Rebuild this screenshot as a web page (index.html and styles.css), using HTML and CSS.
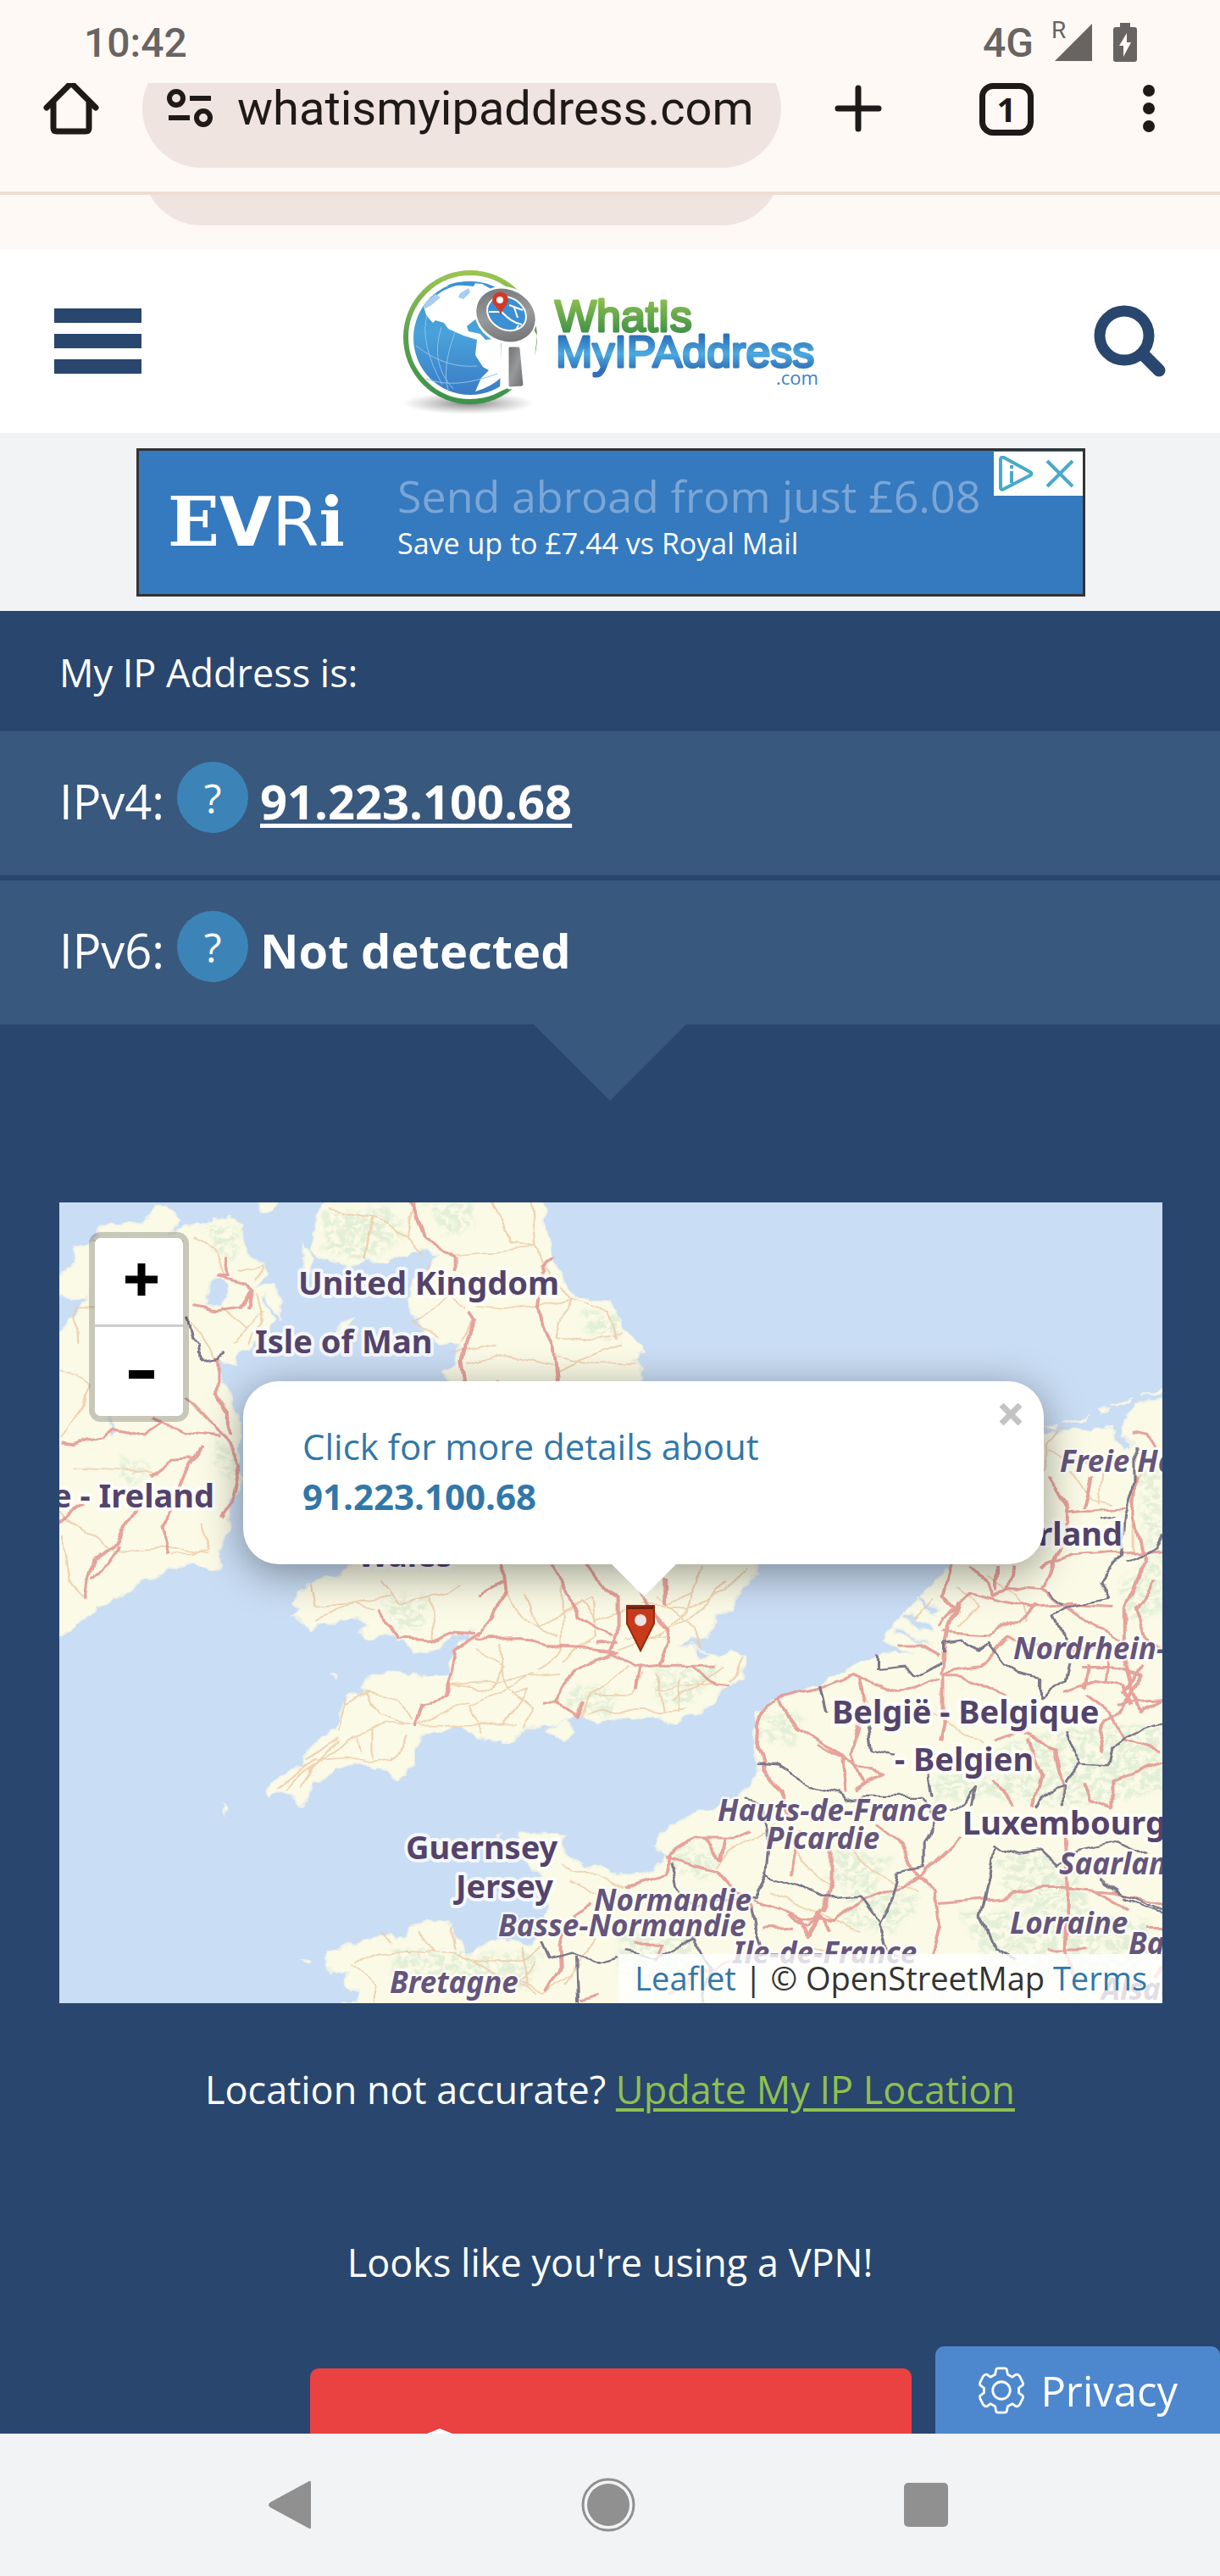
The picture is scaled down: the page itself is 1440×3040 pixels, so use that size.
FILE: index.html
```html
<!DOCTYPE html>
<html lang="en">
<head>
<meta charset="utf-8">
<meta name="viewport" content="width=device-width, initial-scale=1">
<title>What Is My IP Address</title>
<link rel="stylesheet" href="styles.css">
</head>
<body>
<div class="status-bar">
  <span class="clock">10:42</span>
  <div class="status-icons">
    <span class="network">4G</span>
    <span class="signal">
      <span class="roaming">R</span>
      <svg width="44" height="44" viewBox="0 0 44 44" aria-hidden="true"><path d="M44 0V44H0Z" fill="currentColor"/></svg>
    </span>
    <svg width="28" height="46" viewBox="0 0 28 46" aria-hidden="true"><path d="M8 0h12v5h5a3 3 0 0 1 3 3v35a3 3 0 0 1-3 3H3a3 3 0 0 1-3-3V8a3 3 0 0 1 3-3h5Z" fill="currentColor"/><path d="M16 12 7 27h5v13l9-17h-5Z" fill="#fff9f6"/></svg>
  </div>
</div>

<div class="toolbar">
  <button class="tool-btn" aria-label="Home">
    <svg width="66" height="64" viewBox="0 0 66 64" fill="none" stroke="currentColor" stroke-width="7" stroke-linecap="round" stroke-linejoin="round"><path d="M4 31 33 2 62 31M12 25V55q0 4 4 4H50q4 0 4-4V25"/></svg>
  </button>
  <div class="omnibox">
    <svg width="56" height="46" viewBox="0 0 56 46" fill="none" stroke="currentColor" stroke-width="6" aria-hidden="true"><circle cx="12" cy="11" r="8"/><path d="M28 11H53M3 34H28"/><circle cx="44" cy="34" r="8"/></svg>
    <input class="url" type="text" aria-label="Address" value="whatismyipaddress.com">
  </div>
  <button class="tool-btn" aria-label="New tab">
    <svg width="56" height="56" viewBox="0 0 56 56" stroke="currentColor" stroke-width="7" stroke-linecap="round"><path d="M28 4V52M4 28H52"/></svg>
  </button>
  <button class="tabs" aria-label="Open tabs">1</button>
  <button class="tool-btn" aria-label="More">
    <svg width="14" height="56" viewBox="0 0 14 56" fill="currentColor"><circle cx="7" cy="7" r="7"/><circle cx="7" cy="28" r="7"/><circle cx="7" cy="49" r="7"/></svg>
  </button>
</div>
<div class="toolbar-tail"><div class="tail-pill"></div></div>

<header class="site-header">
  <button class="menu-btn" aria-label="Menu"><span></span><span></span><span></span></button>
  <a class="logo" href="#" aria-label="WhatIsMyIPAddress.com">
    <svg width="500" height="180" viewBox="0 0 500 180">
      <defs>
        <linearGradient id="ring" x1="0" y1="0" x2="0" y2="1"><stop offset="0" stop-color="#9ac552"/><stop offset=".5" stop-color="#5aa050"/><stop offset="1" stop-color="#3d934b"/></linearGradient>
        <linearGradient id="sea" x1="0" y1="0" x2="0" y2="1"><stop offset="0" stop-color="#3b93d6"/><stop offset=".45" stop-color="#4aa2da"/><stop offset="1" stop-color="#3a7cc6"/></linearGradient>
        <linearGradient id="metal" x1="0" y1="0" x2="1" y2="1"><stop offset="0" stop-color="#6d6e70"/><stop offset=".5" stop-color="#98999b"/><stop offset="1" stop-color="#67686a"/></linearGradient>
        <linearGradient id="green" gradientUnits="userSpaceOnUse" x1="0" y1="43" x2="0" y2="82"><stop offset="0" stop-color="#8bbd50"/><stop offset="1" stop-color="#409148"/></linearGradient>
        <linearGradient id="blue" gradientUnits="userSpaceOnUse" x1="0" y1="86" x2="0" y2="132"><stop offset="0" stop-color="#2e72b9"/><stop offset=".45" stop-color="#4ca9e0"/><stop offset=".85" stop-color="#3070b8"/></linearGradient>
        <radialGradient id="shade"><stop offset="0" stop-color="#777" stop-opacity=".9"/><stop offset="1" stop-color="#999" stop-opacity="0"/></radialGradient>
      </defs>
      <ellipse cx="84" cy="165" rx="78" ry="13" fill="url(#shade)"/>
      <circle cx="86" cy="87" r="76" fill="#fff" stroke="url(#ring)" stroke-width="6"/>
      <circle cx="86" cy="88" r="67" fill="url(#sea)"/>
      <path d="M36 50 47 37Q62 25 88 23L100 24 128 40 132 76 119 83 108 78 106 68 92 66 82 74 84 80 98 83 104 90 114 89 122 92 123 134Q112 145 92 151L99 135 108 126 101 122 92 108 94 90 78 85 60 77 55 70 45 67 42 70 34 61 31 50Z" fill="#fff"/>
      <path d="m33 46 12-10 6 4-12 10-8 4ZM74 35l10-6 2 5-8 8-6-2Z" fill="#a8cdf0"/>
      <path d="M58 26Q75 19 92 23L90 27Q75 25 58 26Z" fill="#3b93d6"/>
      <path d="M35 61Q26 93 53 143M52 75Q38 118 66 148M68 81Q52 125 60 149M22 97Q56 124 94 121M34 136Q68 149 118 130" fill="none" stroke="#8cc3ec"/>
      <path d="m148 55 17 30-6 50-38 16 2-70Z" fill="#fff"/>
      <ellipse cx="128" cy="61" rx="38" ry="33" transform="rotate(28 128 61)" fill="#fff"/>
      <ellipse cx="128" cy="61" rx="36" ry="30" transform="rotate(28 128 61)" fill="url(#metal)"/>
      <ellipse cx="129" cy="59" rx="25" ry="20" transform="rotate(28 129 59)" fill="#fff"/>
      <ellipse cx="129" cy="59" rx="23" ry="18" transform="rotate(28 129 59)" fill="#3d8fd3"/>
      <path d="M108 57H123Q135 70 147 72M132 49 148 55M138 52 142 64M143 73 140 78" fill="none" stroke="#fff" stroke-width="2"/>
      <path d="M122 61C120 52 112 49 112 43A9 9 0 0 1 131 43C131 49 124 52 122 61Z" fill="#d13a28"/>
      <circle cx="121" cy="43" r="4" fill="#fff"/>
      <path d="M130 100q0-3 3-3h9q3 0 4 3l4 44-3 2-15 1-2-2Z" fill="url(#metal)" stroke="#fff" stroke-width="3"/>
      <path d="M147 90Q160 90 163 85Q167 115 145 138" fill="none" stroke="url(#ring)" stroke-width="0"/>
      <g class="wordmark" stroke-width="3" stroke-linejoin="round">
        <text x="186" y="80" fill="url(#green)" stroke="url(#green)">WhatIs</text>
        <text x="187" y="122" fill="url(#blue)" stroke="url(#blue)">MyIPAddress</text>
      </g>
      <text class="dotcom" x="447" y="143" fill="#3a83c8">.com</text>
    </svg>
  </a>
  <button class="search-btn" aria-label="Search">
    <svg width="86" height="86" viewBox="0 0 86 86" fill="none" stroke="currentColor"><circle cx="36" cy="36" r="29" stroke-width="13"/><path d="M58 58 77 77" stroke-width="15" stroke-linecap="round"/></svg>
  </button>
</header>

<div class="ad-strip">
  <div class="ad">
    <div class="brand"><span class="brand-e">E</span><span class="brand-v">V</span><span class="brand-r">R</span><span class="brand-e">i</span></div>
    <div class="ad-copy">
      <p class="ad-title">Send abroad from just £6.08</p>
      <p class="ad-sub">Save up to £7.44 vs Royal Mail</p>
    </div>
    <div class="ad-controls">
      <svg width="42" height="42" viewBox="0 0 42 42" fill="none" stroke="#4aa9c9" stroke-width="4" aria-hidden="true"><path d="M3 4V38q1 3 4 1L38 23q3-2 0-4L7 2Q3 1 3 4Z" stroke-linejoin="round"/><path d="M16 18V32M16 11V15"/></svg>
      <button class="ad-close" aria-label="Close ad"><svg width="34" height="34" viewBox="0 0 34 34" stroke="#4aa9c9" stroke-width="4"><path d="M2 2 32 32M32 2 2 32"/></svg></button>
    </div>
  </div>
</div>

<main class="content">
  <p class="lead">My IP Address is:</p>
  <div class="ip-row"><span>IPv4:</span><button class="help" aria-label="About IPv4">?</button><a class="ip-value" href="#">91.223.100.68</a></div>
  <div class="ip-row ip-row-last"><span>IPv6:</span><button class="help" aria-label="About IPv6">?</button><span class="ip-value">Not detected</span></div>
  <div class="pointer"></div>

  <section class="map" aria-label="Location map">
    <svg class="tiles" viewBox="0 0 1302 945" preserveAspectRatio="xMidYMid slice">
      <defs>
        <filter id="rough" x="0" y="0" width="1" height="1"><feTurbulence type="fractalNoise" baseFrequency=".05" numOctaves="3" seed="4" result="n"/><feDisplacementMap in="SourceGraphic" in2="n" scale="15" xChannelSelector="R" yChannelSelector="G"/></filter>
        <filter id="wobble" x="0" y="0" width="1" height="1"><feTurbulence type="fractalNoise" baseFrequency=".03" numOctaves="2" seed="9" result="n"/><feDisplacementMap in="SourceGraphic" in2="n" scale="14" xChannelSelector="R" yChannelSelector="G"/></filter>
        <filter id="woods" x="0" y="0" width="1" height="1"><feGaussianBlur in="SourceAlpha" stdDeviation="8" result="soft"/><feTurbulence type="fractalNoise" baseFrequency=".05" numOctaves="4" seed="2" result="n"/><feColorMatrix in="n" values="0 0 0 0 .77  0 0 0 0 .86  0 0 0 0 .68  5 0 0 0 -2"/><feComposite in2="soft" operator="in"/></filter>
        <clipPath id="land">
          <use href="#ireland"/><use href="#britain"/><use href="#europe"/>
        </clipPath>
      </defs>
      <rect width="1302" height="945" fill="#c9ddf4"/>
      <g filter="url(#rough)">
        <g transform="translate(-10 -19) scale(.4464 .3333)" fill="#fafae6" stroke="#eef1e6" stroke-width="5">
          <path id="ireland" d="M0 340 70 270 55 215 120 180 130 140 190 130 240 140 270 70 320 80 345 120 310 170 400 125 470 110 505 140 510 220 560 275 570 310 540 350 590 350 610 410 605 470 580 420 570 380 560 400 590 480 560 530 500 590 490 630 440 620 450 680 470 720 480 790 500 850 490 920 500 1000 495 1060 470 1130 475 1200 450 1290 455 1340 420 1360 380 1340 330 1355 280 1380 230 1400 190 1460 170 1450 100 1520 60 1560 0 1610V530L70 450 100 400 0 380Z"/>
          <path id="britain" d="M735 30 700 140 685 230 740 260 800 280 850 270 940 250 960 230 1030 240 960 340 940 420 980 500 1030 560 1080 560 1070 620 1040 660 1060 700 1060 800 900 850 850 1000 820 1100 850 1300 790 1345 750 1380 680 1410 630 1470 660 1500 640 1520 690 1570 740 1550 760 1525 810 1530 840 1545 815 1590 840 1600 880 1570 920 1610 960 1650 1000 1655 1050 1600 1120 1570 1080 1630 1060 1680 1050 1730 980 1735 920 1715 840 1730 825 1770 835 1790 780 1800 770 1880 740 1940 690 1980 665 2040 590 2100 565 2130 570 2165 600 2140 640 2150 655 2195 680 2160 690 2110 730 2090 750 2060 830 2050 890 2080 915 2105 935 2095 940 2060 960 2040 960 1990 985 1950 1070 1915 1120 1940 1150 1970 1220 1965 1240 1920 1320 1910 1350 1900 1400 1870 1440 1900 1500 1880 1580 1875 1630 1905 1700 1870 1760 1830 1770 1780 1830 1740 1840 1660 1780 1660 1690 1640 1660 1615 1740 1600 1760 1510 1800 1500 1830 1420 1870 1360 1900 1200 1850 900 1750 800 1565 700 1545 610 1568 580 1530 530 1480 420 1370 370 1330 270 1310 150 1290 30Z"/>
          <path id="europe" d="M2970 755 2880 760 2860 790 2830 850 2830 880 2860 910 2840 930 2810 890 2805 845 2700 870 2625 880 2500 950 2450 1200 2390 1338 2323 1420 2273 1490 2243 1530 2203 1600 2223 1640 2290 1650 2173 1670 2120 1700 2030 1760 1920 1820 1865 1860 1860 1980 1870 2070 1850 2110 1820 2160 1720 2210 1690 2230 1610 2290 1600 2340 1630 2370 1590 2420 1550 2440 1500 2430 1450 2410 1400 2400 1370 2380 1350 2330 1360 2300 1340 2290 1240 2290 1245 2340 1260 2400 1290 2430 1300 2480 1310 2560 1300 2650 1270 2690 1220 2660 1160 2670 1105 2720 1080 2680 1050 2600 1000 2600 950 2620 940 2660 870 2650 800 2680 730 2720 735 2790 790 2790 770 2820 820 2850 810 2880 720 2930H2970Z"/>
          <path d="M550 30H605L590 90 550 90ZM665 205 690 250 680 310 660 260ZM805 455 790 490 745 530 770 490ZM1310 1930 1360 1885 1390 1920 1360 1965ZM450 2190 465 2200 455 2225ZM668 2738 685 2745 675 2755ZM745 1730 752 1735 748 1750ZM1185 2285 1195 2285 1190 2295ZM2630 850 2660 845 2650 865ZM2675 840 2740 815 2730 830ZM2765 790 2800 785 2780 810ZM2800 775 2860 750 2850 765ZM2880 738 2950 715 2950 730Z"/>
          <g clip-path="url(#land)">
            <g filter="url(#woods)" stroke="none">
              <path d="M720 100 900 60 940 180 820 270 720 230ZM980 57H1120V140L1050 170ZM1400 440 1520 460 1500 560 1420 520ZM180 180 240 200 200 280ZM400 130 500 140 490 260 440 240ZM180 960 260 980 240 1060 180 1040ZM440 900 500 950 490 1050 430 1000ZM880 1440 1000 1450 980 1580 900 1560ZM1380 1760 1500 1780 1480 1880 1360 1850ZM1600 1700 1780 1700 1700 1820 1600 1840ZM2080 2340 2220 2380 2180 2500 2040 2460ZM2330 2080 2560 1960 2700 1920 2940 1900 2940 2140 2700 2200 2500 2160 2320 2180ZM2480 2360 2700 2380 2760 2600 2550 2560ZM1640 2340 1780 2340 1740 2460 1640 2420ZM2400 2560 2900 2600 2900 2850 2480 2760ZM1500 2640 1700 2640 1700 2800 1500 2800ZM900 2700 1300 2720 1250 2850 900 2800ZM2820 1400 2940 1300 2940 1500 2860 1560ZM2870 1000 2939 960 2939 1300 2890 1260ZM1880 1860 2000 1880 1960 1980 1870 1960ZM2100 2480 2300 2520 2240 2640 2100 2620Z"/>
            </g>
          </g>
          <path fill="#c9ddf4" d="M425 320 470 350 455 420 410 420ZM150 790 175 870 160 880ZM2260 1510 2330 1560 2320 1575 2250 1525ZM2230 1570 2320 1612 2330 1625 2230 1585ZM2290 1450 2350 1500 2340 1512 2290 1470ZM1690 1630 1740 1655 1720 1675Z"/>
        </g>
      </g>
      <g filter="url(#wobble)" fill="none" stroke-linejoin="round">
        <g transform="translate(-10 -19) scale(.4464 .3333)">
          <g class="road minor">
            <path d="M22 650 110 700M110 180 200 240 260 290M70 560 65 430 220 430M380 170 430 220 460 320M360 480 420 560 440 620M500 300 560 280 545 330M540 380 560 480 520 560M350 180 330 250M22 1150 160 1290 290 1280 420 1300M30 1230 50 1400 90 1460M400 1200 420 1290 320 1310M60 1000 200 1010 280 1020M22 900 90 760 110 700M450 430 520 500M560 440 480 560"/>
            <path d="M730 80 850 110 830 260M850 110 940 180 980 240M1070 240 1170 230 1280 210 1310 290M940 180 970 60M1000 280 970 350 1050 400 1100 430M1050 400 960 480 1030 540M1120 470 1080 560M1130 420 1280 440 1370 400 1470 440 1500 540M1340 530 1400 550 1510 520M1340 600 1440 630 1550 630M1340 660 1420 600 1510 560M1100 630 1180 600 1330 640M1340 530 1360 440 1370 400M1370 400 1310 290M1160 60 1220 200 1280 210 1270 60M1060 590 1180 560"/>
            <path d="M690 1400 700 1490 800 1480 850 1500M880 1400 920 1480 1000 1450 1080 1420M1000 1450 1010 1600M700 1540 760 1500 830 1470 900 1450M1200 1440 1260 1540 1340 1600M1260 1440 1290 1560 1350 1500 1430 1450M1350 1400 1350 1640 1290 1720M1430 1450 1440 1600 1350 1680M1120 1640 1200 1700 1160 1780 1050 1760M1190 1620 1200 1780 1280 1730M1060 1760 1200 1750 1340 1730M1100 1830 1200 1780 1270 1850 1250 1920M1100 1830 1140 1940M970 1910 1100 1820M980 1910 1130 1910 1230 1900M830 1790 860 1870 950 1910M830 1790 920 1810 960 1890M780 1820 760 1930M740 2010 800 1950 880 1900 960 1910M680 2030 760 1950M600 2130 700 2030 780 2020 850 2040 900 2030 940 1950M660 2140 690 2060 760 1960M810 1940 820 2000M850 1920 850 2030M620 2140 660 2080 740 2010M840 1790 780 1840M1210 1800 1260 1780 1200 1900"/>
            <path d="M1400 1870 1430 1800 1520 1700M1420 1860 1580 1860 1680 1850M1440 1800 1540 1800 1570 1720M1600 1720 1620 1860M1660 1740 1660 1860M1600 1780 1760 1760M1700 1430 1680 1500 1600 1600M1790 1400 1720 1490 1640 1560M1720 1340 1700 1440 1620 1480M1840 1350 1780 1440M1520 1500 1440 1540 1400 1460M1560 1480 1680 1490 1780 1440M1520 1600 1640 1600M1600 1450 1700 1560 1720 1640M1500 1640 1620 1580M1780 1700 1700 1780 1640 1820M1830 1660 1800 1760"/>
            <path d="M1280 2740 1240 2820 1300 2860 1400 2760M1350 2400 1380 2430 1450 2430 1520 2480M1370 2460 1450 2520M800 2750 870 2710 940 2700 1060 2710 1110 2740 1200 2750 1300 2700M970 2640 1010 2710M1060 2620 1070 2700M900 2680 880 2640M790 2760 860 2830 860 2892M1110 2740 1280 2860M1240 2700 1260 2840M1440 2660 1360 2820M1760 2410 1790 2350 1870 2300 1920 2260M1900 2500 2040 2580 2140 2640M1960 2300 1990 2400 2060 2480M2020 2700 2100 2700 2200 2720M2120 2340 2170 2420 2290 2500M2150 1780 2160 1860 2190 1920M2270 1820 2350 1880 2460 1980M2480 1380 2550 1440 2580 1540M2680 850 2640 920 2620 1000M2700 1000 2750 1100 2800 1120M2640 940 2780 1000 2770 1120M2880 1020 2860 1100 2860 1300M2400 1420 2450 1480 2400 1560M2330 1460 2280 1540"/>
          </g>
          <g class="road major">
            <path d="M460 250 470 320 450 325 520 350 530 370 500 430 440 440 375 428M530 370 520 430M22 915 60 920 100 900 150 890 165 860 250 885 300 840 350 870 440 885M275 815 300 840M350 745 410 800 440 870 480 920 500 1000 480 1110 450 1175M440 600 440 740 470 790 470 880M400 930 370 990 330 1120 290 1200 310 1310M380 965 320 970 260 1030M22 1190 80 1120M230 1140 180 1260 110 1320 90 1460M180 1270 110 1400"/>
            <path d="M960 60 990 180 1070 250 1070 300M1110 440 1125 470 1100 540 1085 620 1095 700M1305 290 1290 440 1330 570 1340 700M1330 250 1300 290M1180 690 1200 700"/>
            <path d="M1190 1340 1200 1440 1170 1540 1120 1590 1070 1640 1060 1720 1040 1810 985 1830 965 1920M1130 1450 1200 1400M860 1500 900 1550 920 1605 1000 1610 1060 1575 1120 1580M1120 1600 1240 1595 1340 1635 1420 1640 1500 1650M1320 1340 1370 1450 1390 1520 1450 1570 1490 1590M1410 1340 1500 1450 1500 1580 1480 1650 1540 1700 1610 1690 1640 1620 1630 1570 1580 1500 1550 1400 1560 1340M1490 1650 1380 1710 1350 1780 1340 1830 1390 1870 1410 1820M1340 1830 1300 1830M1440 1620 1500 1615M1620 1380 1620 1480M1610 1690 1690 1690 1760 1770 1800 1775M1690 1690 1760 1690M1560 1700 1550 1780"/>
            <path d="M1923 1815 1890 1840 1873 1900 1870 1990 1890 2070 1930 2150 1960 2250M1923 1815 2030 1780 2120 1730 2240 1795 2350 1740M1923 1815 1980 1920 2050 1980 2090 2020 2100 2150M2140 1740 2150 1800 2140 1920 2110 2010 2160 2120M2030 1980 2080 2020 2200 2080 2130 2140M2350 1720 2370 1580 2400 1480 2430 1440 2580 1490 2700 1480 2810 1490M2350 1720 2460 1700 2530 1600 2600 1620 2700 1650 2800 1620M2360 1720 2460 1760 2520 1800M2360 1720 2360 1900 2350 1960M2240 1620 2300 1620 2350 1660M2360 1580 2480 1590 2560 1540 2600 1480"/>
            <path d="M2380 1340 2360 1450 2390 1500 2350 1560M2430 1340 2480 1400 2490 1450 2530 1420 2620 1430 2650 1340M2500 1340 2500 1430M2640 1020 2690 1140 2690 1190 2650 1340M2690 1155 2840 1135M2750 1030 2730 1140M2860 870 2900 880 2920 930M2870 1030 2860 1180 2890 1330 2840 1500 2840 1700 2880 1860 2939 1820M2620 1430 2700 1500 2740 1540 2830 1600M2550 1340 2530 1420M2939 1290 2700 1310 2620 1350M2920 1400 2870 1500 2900 1600 2939 1640"/>
            <path d="M2720 1700 2800 1700 2880 1740 2830 1860 2790 1900 2770 2000M2680 1790 2760 1750 2840 1770 2860 1840M2500 1960 2560 1930 2650 1990 2680 2160M2580 1960 2620 2080 2600 2190M2490 2100 2550 2200M2730 2110 2750 2170 2810 2200 2810 2110 2939 2040M2740 1800 2800 1860 2840 1960 2939 2000M2740 1690 2730 1780M2800 1640 2790 1760M2880 1700 2840 1800M2820 1830 2939 1820"/>
            <path d="M1523 2480 1620 2440 1630 2370 1700 2310 1800 2310 1850 2280M1620 2370 1690 2400 1760 2420 1810 2500 1850 2560M1720 2310 1770 2380 1780 2310M1850 2530 1930 2560 1980 2590 2070 2600 2150 2520 2280 2460 2300 2440M1980 2590 2000 2660 2030 2580 2060 2640M1950 2580 2000 2620 2040 2560M1960 2620 1880 2625M1980 2270 1960 2440M2060 2340 2060 2460 2040 2570M2180 2260 2250 2330 2290 2440 2340 2500 2350 2620 2330 2720M2300 2440 2400 2310M2350 2540 2520 2520 2620 2480 2680 2480 2820 2500 2939 2540M2680 2300 2690 2480 2680 2700 2720 2820M2760 2490 2850 2560M2630 2700 2740 2700M1310 2850 1350 2760 1345 2640M1450 2860 1400 2880M1380 2580 1430 2540M1530 2480 1620 2440M2900 2630 2939 2630M2940 2760 2920 2800M1540 2680 1620 2680 1600 2740M1640 2870 1720 2780 1800 2740"/>
          </g>
          <g class="border">
            <path d="M355 470 370 540 395 560 400 610 440 600 465 585M1300 2680 1320 2740 1380 2720 1450 2750 1500 2730M1390 2730 1395 2890M2033 1770 2050 1870M2160 1910 2170 1990 2230 2010M2183 1660 2183 1710 2260 1700 2280 1730 2350 1680M2360 1650 2360 1620 2410 1610 2450 1650 2480 1620 2520 1690 2560 1720 2620 1740 2620 1810 2680 1750 2690 1680M2865 930 2865 1050 2840 1160 2830 1310 2775 1400 2800 1460 2690 1490 2650 1520 2690 1640M2680 1480 2640 1440M2780 1180 2810 1170M2939 1240 2920 1280 2840 1330"/>
            <path d="M1870 2045 1920 2050 1980 2100 2020 2130 2080 2150 2100 2170 2150 2160 2300 2160 2340 2240 2310 2320 2310 2410 2240 2430 2220 2530 2190 2610 2210 2700 2250 2740M2320 2080 2330 2160M2380 2210 2420 2180 2450 2130 2440 2190M1830 2160 1880 2200 1900 2300 1890 2440 1980 2480 2040 2520 2140 2510 2190 2600M1635 2390 1650 2480 1700 2540 1860 2520 1890 2440M1850 2560 1860 2620 1880 2700M2490 2330 2560 2360 2620 2350 2660 2400 2720 2350 2820 2320 2900 2370M2500 2330 2480 2480 2460 2590 2500 2700 2550 2740M2770 2450 2830 2500 2939 2560M2840 2520 2939 2570M2610 2190 2650 2130 2680 2120 2680 2200M2680 2110 2720 2040 2690 1960 2680 1930M2720 2045 2790 2050 2800 1980 2870 1930 2939 1900M1523 2710 1600 2730 1700 2660 1740 2760 1720 2890"/>
          </g>
        </g>
      </g>
      <g class="country">
        <text x="282" y="109">United Kingdom</text>
        <text x="231" y="178">Isle of Man</text>
        <text x="183" y="360" text-anchor="end">Éire - Ireland</text>
        <text x="352" y="430">Wales</text>
        <text x="1255" y="405" text-anchor="end">Nederland</text>
        <text x="912" y="615">België - Belgique</text>
        <text x="986" y="671">- Belgien</text>
        <text x="1066" y="746">Luxembourg</text>
        <text x="409" y="775">Guernsey</text>
        <text x="468" y="821">Jersey</text>
      </g>
      <g class="region">
        <text x="1181" y="318">Freie Hansestadt</text>
        <text x="1126" y="539">Nordrhein-</text>
        <text x="777" y="730">Hauts-de-France</text>
        <text x="834" y="763">Picardie</text>
        <text x="1180" y="793">Saarland</text>
        <text x="631" y="836">Normandie</text>
        <text x="518" y="866">Basse-Normandie</text>
        <text x="795" y="898">Ile-de-France</text>
        <text x="1122" y="863">Lorraine</text>
        <text x="1262" y="887">Baden</text>
        <text x="390" y="933">Bretagne</text>
        <text x="1230" y="941">Alsace</text>
      </g>
    </svg>
    <svg class="marker" width="36" height="56" viewBox="0 0 36 56" aria-hidden="true"><path d="M2 1H34V22L18 54 2 22Z" fill="#c93a1a" stroke="#8f2c10" stroke-width="2"/><path d="M3 2H33V5H3Z" fill="#6b2410"/><circle cx="18" cy="18" r="7" fill="#efe3df"/></svg>
    <div class="zoom">
      <button class="zoom-btn zoom-in" aria-label="Zoom in"><svg width="38" height="38" viewBox="0 0 38 38"><path d="M19 0V38M0 19H38" stroke="#000" stroke-width="9"/></svg></button>
      <button class="zoom-btn zoom-out" aria-label="Zoom out"><svg width="38" height="38" viewBox="0 0 38 38"><path d="M4 19H34" stroke="#000" stroke-width="10"/></svg></button>
    </div>
    <div class="popup">
      <a href="#">Click for more details about<br><b>91.223.100.68</b></a>
      <button class="popup-close" aria-label="Close popup"><svg width="26" height="26" viewBox="0 0 26 26" stroke="#c3c3c3" stroke-width="7"><path d="M2 2 24 24M24 2 2 24"/></svg></button>
    </div>
    <div class="attribution"><a href="#">Leaflet</a> | © OpenStreetMap <a href="#">Terms</a></div>
  </section>

  <p class="note">Location not accurate? <a href="#">Update My IP Location</a></p>
  <p class="note vpn">Looks like you're using a VPN!</p>
  <button class="vpn-btn" aria-label="Hide my IP"><svg width="30" height="6" viewBox="0 0 30 6" fill="#fff"><path d="M0 6 15 0 30 6Z"/></svg></button>
  <button class="privacy">
    <svg width="56" height="60" viewBox="0 0 60 60" fill="none" stroke="currentColor" stroke-width="3" stroke-linejoin="round" aria-hidden="true"><path d="M26 2H34Q37 2 37 5L38 10 44 13 48 10Q51 9 53 12L57 20Q58 23 56 24L52 27V33L56 36Q58 37 57 40L53 48Q51 51 48 50L44 47 38 50 37 55Q37 58 34 58H26Q23 58 23 55L22 50 16 47 12 50Q9 51 7 48L3 40Q2 37 4 36L8 33V27L4 24Q2 23 3 20L7 12Q9 9 12 10L16 13 22 10 23 5Q23 2 26 2Z"/><circle cx="30" cy="30" r="11"/></svg>
    Privacy
  </button>
</main>

<nav class="nav-bar" aria-label="System">
  <button aria-label="Back"><svg width="64" height="64" viewBox="0 0 64 64" fill="currentColor"><path d="M54 4Q56 3 56 6V58Q56 61 54 60L8 35Q4 32 8 29Z"/></svg></button>
  <button aria-label="Home"><svg width="64" height="64" viewBox="0 0 64 64" fill="currentColor"><circle cx="32" cy="32" r="25"/><circle cx="32" cy="32" r="30" fill="none" stroke="currentColor" stroke-width="3"/></svg></button>
  <button aria-label="Recents"><svg width="64" height="64" viewBox="0 0 64 64" fill="currentColor"><rect x="6" y="6" width="52" height="52" rx="5"/></svg></button>
</nav>
</body>
</html>
```
FILE: styles.css
```css
* { box-sizing: border-box; }
body {
  margin: 0;
  min-height: 100vh;
  display: flex;
  flex-direction: column;
  background: #fff;
  font-family: "Open Sans", "Noto Sans", sans-serif;
}
p { margin: 0; }
button { border: 0; padding: 0; background: none; color: inherit; font: inherit; display: flex; align-items: center; justify-content: center; }
svg { display: block; flex: none; }

.status-bar {
  height: 98px;
  padding: 2px 98px 0 99px;
  display: flex;
  align-items: center;
  justify-content: space-between;
  background: #fff9f6;
  color: #686462;
  font-family: Roboto, sans-serif;
  font-size: 48px;
  font-weight: 500;
}
.status-icons { display: flex; align-items: center; gap: 25px; }
.signal { position: relative; }
.roaming { position: absolute; left: -4px; top: -6px; font-size: 28px; font-weight: 400; line-height: 28px; }

.toolbar {
  height: 132px;
  padding: 0 77px 0 51px;
  display: flex;
  align-items: flex-start;
  overflow: hidden;
  background: #fff9f6;
  border-bottom: 4px solid #eeddd4;
  color: #1f1a17;
}
.tool-btn { height: 60px; }
.omnibox {
  flex: 1;
  min-width: 0;
  height: 140px;
  margin: -40px 63px 0 51px;
  padding: 0 12px 0 28px;
  display: flex;
  align-items: center;
  gap: 28px;
  border-radius: 70px;
  background: #efe4e0;
}
.url {
  flex: 1;
  min-width: 0;
  border: 0;
  padding: 0;
  background: none;
  color: inherit;
  font-family: Roboto, sans-serif;
  font-size: 56px;
}
.tabs {
  width: 64px;
  height: 62px;
  margin: 0 129px 0 115px;
  border: 7px solid #1f1a17;
  border-radius: 16px;
  font-family: "Open Sans", sans-serif;
  font-weight: 700;
  font-size: 40px;
  line-height: 40px;
}
.toolbar-tail { height: 64px; padding: 0 518px 28px 168px; overflow: hidden; display: flex; align-items: flex-end; background: #fff9f6; }
.tail-pill { flex: 1; height: 140px; border-radius: 70px; background: #efe4e0; }

.site-header {
  height: 217px;
  padding: 0 63px 0 64px;
  display: flex;
  align-items: center;
  justify-content: space-between;
  color: #29466e;
}
.menu-btn { flex-direction: column; gap: 13px; }
.menu-btn span { width: 103px; height: 17px; background: #29466e; }
.logo { margin: 0 20px 4px 0; }
.wordmark text { font-family: "Liberation Sans", Arial, sans-serif; font-size: 52px; }
.dotcom { font-family: "Open Sans", sans-serif; font-size: 22px; }

.ad-strip { padding: 18px 24px 17px; display: flex; justify-content: center; background: #f1f3f5; }
.ad {
  position: relative;
  width: 1120px;
  height: 175px;
  margin-left: 2px;
  padding-left: 34px;
  display: flex;
  align-items: center;
  border: 3px solid #333;
  background: #3579bf;
  color: #fff;
}
.brand { width: 271px; display: flex; align-items: baseline; font-size: 80px; line-height: 96px; }
.brand-e { font-family: "DejaVu Serif", serif; font-weight: 700; }
.brand-v { font-family: "DejaVu Sans", sans-serif; font-weight: 700; }
.brand-r { font-family: "DejaVu Sans", sans-serif; }
.ad-copy { padding-bottom: 12px; }
.ad-title { color: #7ba6d5; font-size: 52px; line-height: 60px; white-space: nowrap; }
.ad-sub { font-size: 34px; line-height: 52px; white-space: nowrap; }
.ad-controls { position: absolute; top: 1px; right: 0; width: 105px; height: 52px; padding: 0 10px 0 5px; display: flex; align-items: center; justify-content: space-between; background: #fff; }

.content {
  position: relative;
  flex: 1;
  display: flex;
  flex-direction: column;
  background: #29466e;
  color: #fff;
  overflow: hidden;
}
.lead { padding: 42px 70px 38px; font-size: 45px; line-height: 62px; }
.ip-row { height: 170px; padding: 0 70px 6px; display: flex; align-items: center; font-size: 56px; background: #38587e; }
.ip-row + .ip-row { margin-top: 6px; }
.help { width: 84px; height: 84px; margin: 0 14px 8px 15px; border-radius: 50%; background: #3c84b7; font-size: 48px; }
.ip-value { color: #fff; font-weight: 700; text-underline-offset: 5px; text-decoration-thickness: 5px; }
.pointer { align-self: center; border: 90px solid transparent; border-top-color: #38587e; border-bottom: 0; }

.map { position: relative; height: 945px; margin: 120px 68px 0 70px; overflow: hidden; }
.tiles { width: 100%; height: 100%; }
.minor { stroke: #eec9a6; stroke-width: 5; opacity: .8; }
.major { stroke: #e3938f; stroke-width: 9; opacity: .85; }
.border { stroke: #7b778a; stroke-width: 7; }
.country text, .region text { font-family: "Noto Sans", sans-serif; font-weight: 700; fill: #54436a; stroke: #fffc; stroke-width: 8px; stroke-linejoin: round; paint-order: stroke; }
.country text { font-size: 38px; }
.region text { font-size: 35px; font-style: italic; fill: #65557a; stroke-width: 5px; }
.marker { position: absolute; left: 668px; top: 475px; }
.zoom { position: absolute; left: 35px; top: 35px; border: 7px solid #0003; border-radius: 14px; background-clip: padding-box; }
.zoom-btn { width: 104px; height: 105px; padding-left: 6px; background: #fff; }
.zoom-in { padding-bottom: 4px; border-bottom: 3px solid #ccc; border-radius: 7px 7px 0 0; }
.zoom-out { padding-top: 6px; border-radius: 0 0 7px 7px; }
.popup {
  position: absolute;
  left: 217px;
  top: 211px;
  width: 945px;
  padding: 47px 70px 51px;
  border-radius: 42px;
  background: #fff;
  box-shadow: 0 10px 50px rgba(0, 0, 0, .4);
  font-size: 42px;
  line-height: 59px;
}
.popup::after { content: ""; position: absolute; left: 435px; top: 100%; border: 38px solid transparent; border-top-color: #fff; border-bottom: 0; }
.popup a, .attribution a { color: #3277a8; text-decoration: none; }
.popup-close { position: absolute; top: 26px; right: 26px; }
.attribution { position: absolute; right: 0; bottom: 0; padding: 0 18px 2px 19px; font-size: 38px; line-height: 56px; color: #333; background: rgba(255, 255, 255, .8); white-space: nowrap; }

.note { padding-top: 71px; font-size: 45px; line-height: 62px; text-align: center; }
.note a { color: #8fc04f; text-underline-offset: 5px; text-decoration-thickness: 4px; }
.vpn { padding-top: 142px; }
.vpn-btn { align-self: center; width: 710px; height: 77px; margin: 94px 0 0 2px; padding-left: 138px; align-items: flex-end; justify-content: flex-start; border-radius: 10px 10px 0 0; background: #ea4141; }
.privacy { position: absolute; right: 0; bottom: 0; height: 103px; padding: 0 50px; gap: 18px; border-radius: 10px 10px 0 0; background: #4d88cf; font-size: 49px; }

.nav-bar { height: 168px; padding: 0 315px 0 311px; display: flex; align-items: center; justify-content: space-between; background: #f1f3f5; color: #909090; }
```
